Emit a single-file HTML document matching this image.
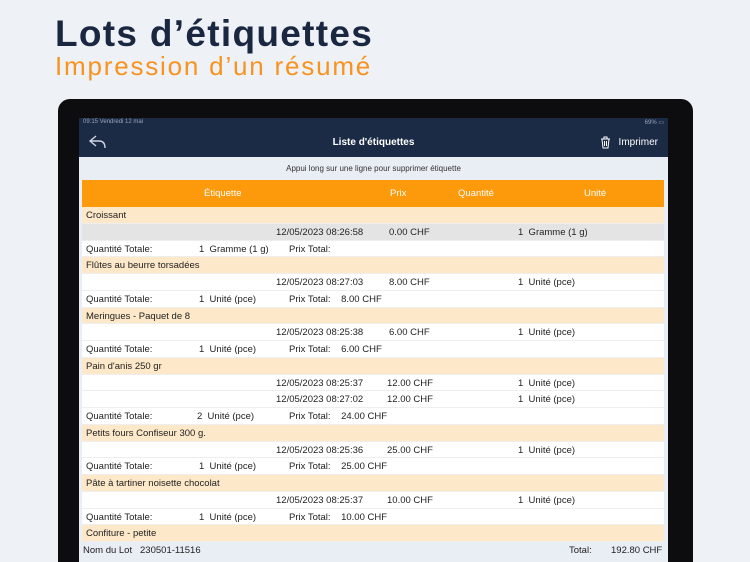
<!DOCTYPE html>
<html><head><meta charset="utf-8"><style>
*{margin:0;padding:0;box-sizing:border-box}
html,body{width:750px;height:562px;overflow:hidden}
body{background:#eef1f6;font-family:"Liberation Sans",sans-serif;position:relative}
.t1{position:absolute;left:55px;top:13px;font-size:37px;font-weight:bold;color:#1a2740;letter-spacing:1.3px}
.t2{position:absolute;left:55px;top:51px;font-size:26px;color:#f7931e;letter-spacing:1.8px}
.dev{position:absolute;left:58px;top:99px;width:635px;height:463px;background:#0d0d0f;border-radius:12px 12px 0 0}
.scr{position:absolute;left:79px;top:118px;width:589px;height:444px;background:#e9edf4;overflow:hidden}
.sb{height:10px;background:#1b2a45;color:#9aa4b8;font-size:6px;padding:1px 4px}
.nav{height:29px;background:#1b2a45;color:#fff;font-size:10px;position:relative}
.nav .c{position:absolute;left:0;right:0;text-align:center;top:9px;font-weight:bold}
.nav .r{position:absolute;right:10px;top:9px}
.hint{position:absolute;top:46px;left:0;right:0;text-align:center;font-size:8px;color:#333}
.hd{position:absolute;left:3px;top:62px;width:582px;height:27px;background:#fd9a0b;color:#fff;font-size:9.5px}
.hd span,.row span{position:absolute}
.rows{position:absolute;left:3px;top:89px;width:582px}
.row{height:16.75px;position:relative;font-size:9.5px;color:#222;background:#fff;border-bottom:1px solid #eee}
.row span{top:3px}
.g{background:#fde8c9}
.gr{background:#e4e4e4}
.ft{position:absolute;left:0;top:425px;width:589px;height:16px;font-size:9.5px;color:#222}
.ft span{position:absolute;top:2px}
</style></head><body>
<div class="t1">Lots d’étiquettes</div>
<div class="t2">Impression d’un résumé</div>
<div class="dev"></div>
<div class="scr">
<div class="sb">09:15 Vendredi 12 mai<span style="float:right">69% ▭</span></div>
<div class="nav">
<svg style="position:absolute;left:9px;top:6px" width="20" height="16" viewBox="0 0 20 16"><path d="M8 2 L2 7 L8 12 M2 7 H11 Q17 7 17 14" fill="none" stroke="#cfd6e2" stroke-width="1.4"/></svg>
<div class="c">Liste d'étiquettes</div>
<svg style="position:absolute;right:57px;top:8px" width="11" height="13" viewBox="0 0 11 13"><path d="M1 3H10M4 3V1H7V3M2 3L3 12H8L9 3M4.5 5V10M6.5 5V10" fill="none" stroke="#fff" stroke-width="1"/></svg>
<div class="r">Imprimer</div>
</div>
<div class="hint">Appui long sur une ligne pour supprimer étiquette</div>
<div class="hd"><span style="left:122px;top:8px">Étiquette</span><span style="left:308px;top:8px">Prix</span><span style="left:376px;top:8px">Quantité</span><span style="left:502px;top:8px">Unité</span></div>
<div class="rows">
<div class="row g"><span style="left:4px">Croissant</span></div>
<div class="row gr"><span style="left:194px">12/05/2023 08:26:58</span><span style="left:307px">0.00 CHF</span><span style="left:436px">1&nbsp; Gramme (1 g)</span></div>
<div class="row"><span style="left:4px">Quantité Totale:</span><span style="left:117px">1&nbsp; Gramme (1 g)</span><span style="left:207px">Prix Total:</span></div>
<div class="row g"><span style="left:4px">Flûtes au beurre torsadées</span></div>
<div class="row"><span style="left:194px">12/05/2023 08:27:03</span><span style="left:307px">8.00 CHF</span><span style="left:436px">1&nbsp; Unité (pce)</span></div>
<div class="row"><span style="left:4px">Quantité Totale:</span><span style="left:117px">1&nbsp; Unité (pce)</span><span style="left:207px">Prix Total:&nbsp;&nbsp;&nbsp; 8.00 CHF</span></div>
<div class="row g"><span style="left:4px">Meringues - Paquet de 8</span></div>
<div class="row"><span style="left:194px">12/05/2023 08:25:38</span><span style="left:307px">6.00 CHF</span><span style="left:436px">1&nbsp; Unité (pce)</span></div>
<div class="row"><span style="left:4px">Quantité Totale:</span><span style="left:117px">1&nbsp; Unité (pce)</span><span style="left:207px">Prix Total:&nbsp;&nbsp;&nbsp; 6.00 CHF</span></div>
<div class="row g"><span style="left:4px">Pain d'anis 250 gr</span></div>
<div class="row"><span style="left:194px">12/05/2023 08:25:37</span><span style="left:305px">12.00 CHF</span><span style="left:436px">1&nbsp; Unité (pce)</span></div>
<div class="row"><span style="left:194px">12/05/2023 08:27:02</span><span style="left:305px">12.00 CHF</span><span style="left:436px">1&nbsp; Unité (pce)</span></div>
<div class="row"><span style="left:4px">Quantité Totale:</span><span style="left:115px">2&nbsp; Unité (pce)</span><span style="left:207px">Prix Total:&nbsp;&nbsp;&nbsp; 24.00 CHF</span></div>
<div class="row g"><span style="left:4px">Petits fours Confiseur 300 g.</span></div>
<div class="row"><span style="left:194px">12/05/2023 08:25:36</span><span style="left:305px">25.00 CHF</span><span style="left:436px">1&nbsp; Unité (pce)</span></div>
<div class="row"><span style="left:4px">Quantité Totale:</span><span style="left:117px">1&nbsp; Unité (pce)</span><span style="left:207px">Prix Total:&nbsp;&nbsp;&nbsp; 25.00 CHF</span></div>
<div class="row g"><span style="left:4px">Pâte à tartiner noisette chocolat</span></div>
<div class="row"><span style="left:194px">12/05/2023 08:25:37</span><span style="left:305px">10.00 CHF</span><span style="left:436px">1&nbsp; Unité (pce)</span></div>
<div class="row"><span style="left:4px">Quantité Totale:</span><span style="left:117px">1&nbsp; Unité (pce)</span><span style="left:207px">Prix Total:&nbsp;&nbsp;&nbsp; 10.00 CHF</span></div>
<div class="row g"><span style="left:4px">Confiture - petite</span></div>
</div>
<div class="ft"><span style="left:4px">Nom du Lot&nbsp;&nbsp; 230501-11516</span><span style="left:490px">Total:</span><span style="left:532px">192.80 CHF</span></div>
</div>
</body></html>
